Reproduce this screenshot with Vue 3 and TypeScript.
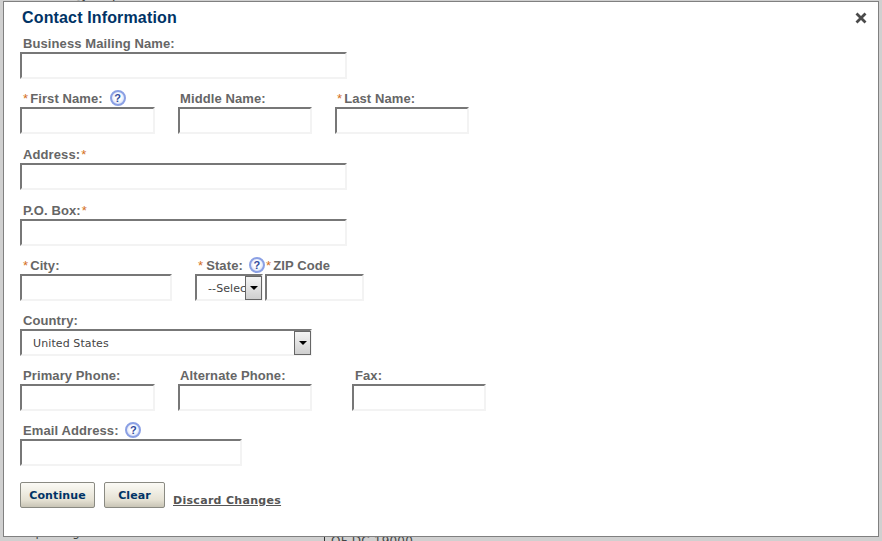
<script setup lang="ts">
import { ref } from 'vue'

const states = ['--Select--', 'DC', 'MD', 'VA']
const state = ref('--Select--')
const country = ref('United States')
</script>

<template>
  <div class="page">
    <div class="backdrop">
      <p class="back-top">Washington, DC 20000</p>
      <div class="back-bottom">
        <span class="back-left">Reporting</span>
        <span class="back-right">OF DC 19000</span>
      </div>
    </div>

    <div class="modal">
      <h2>Contact Information</h2>
      <button class="close" type="button" aria-label="Close">
        <svg width="12" height="12" viewBox="0 0 12 12">
          <path d="M1.5 1.5 10.5 10.5M10.5 1.5 1.5 10.5" stroke="#4a4a4a" stroke-width="2.8" fill="none" />
        </svg>
      </button>

      <form class="form" @submit.prevent>
        <div class="row">
          <div class="field w-wide">
            <label>Business Mailing Name:</label>
            <input type="text" />
          </div>
        </div>

        <div class="row">
          <div class="field w-name-first">
            <label><span class="req">*</span>First Name: <span class="help">?</span></label>
            <input type="text" />
          </div>
          <div class="field w-name">
            <label>Middle Name:</label>
            <input type="text" />
          </div>
          <div class="field w-name">
            <label><span class="req">*</span>Last Name:</label>
            <input type="text" />
          </div>
        </div>

        <div class="row tall">
          <div class="field w-wide">
            <label>Address:<span class="req after">*</span></label>
            <input type="text" />
          </div>
        </div>

        <div class="row tall">
          <div class="field w-wide">
            <label>P.O. Box:<span class="req after">*</span></label>
            <input type="text" />
          </div>
        </div>

        <div class="row">
          <div class="field w-city">
            <label><span class="req">*</span>City:</label>
            <input type="text" />
          </div>
          <div class="state-zip">
            <div class="field w-state">
              <label><span class="req spaced">*</span>State:<span class="help state-help">?</span></label>
              <div class="select-wrap">
                <select v-model="state">
                  <option v-for="s in states" :key="s">{{ s }}</option>
                </select>
                <span class="arrow"></span>
              </div>
            </div>
            <div class="field w-zip">
              <label class="zip-label"><span class="req">*</span>ZIP Code</label>
              <input type="text" />
            </div>
          </div>
        </div>

        <div class="row">
          <div class="field w-country">
            <label>Country:</label>
            <div class="select-wrap">
              <select v-model="country">
                <option>United States</option>
              </select>
              <span class="arrow"></span>
            </div>
          </div>
        </div>

        <div class="row">
          <div class="field w-name-first">
            <label>Primary Phone:</label>
            <input type="text" />
          </div>
          <div class="field w-name">
            <label>Alternate Phone:</label>
            <input type="text" />
          </div>
          <div class="field w-name fax">
            <label>Fax:</label>
            <input type="text" />
          </div>
        </div>

        <div class="row">
          <div class="field w-email">
            <label>Email Address: <span class="help">?</span></label>
            <input type="text" />
          </div>
        </div>

        <div class="actions">
          <button class="btn" type="submit">Continue</button>
          <button class="btn btn-clear" type="reset">Clear</button>
          <a class="discard" href="#" @click.prevent>Discard Changes</a>
        </div>
      </form>
    </div>
  </div>
</template>

<style>
html,
body {
  margin: 0;
  background: #d0d0d0;
}
</style>

<style scoped>
.page {
  position: relative;
  width: 882px;
  height: 541px;
  overflow: hidden;
  background: #d0d0d0;
  font-family: 'Liberation Sans', Arial, sans-serif;
}

.backdrop {
  display: flex;
  flex-direction: column;
  justify-content: space-between;
  height: 541px;
  color: #444;
}

.back-top {
  margin: -15px 0 0 20px;
  font-weight: bold;
  font-size: 16px;
  line-height: 20px;
}

.back-bottom {
  display: flex;
  margin-bottom: -7px;
  line-height: 14px;
  font-family: 'DejaVu Sans', sans-serif;
  font-size: 12px;
  letter-spacing: 0.2px;
}

.back-left {
  width: 304px;
  padding-left: 20px;
  margin-top: -9px;
}

.back-right {
  border-left: 1px solid #333;
  padding-left: 6px;
}

.modal {
  position: absolute;
  left: 3px;
  top: 1px;
  width: 874px;
  height: 534px;
  background: #fff;
  border: 1px solid #808080;
}

h2 {
  margin: 0;
  position: absolute;
  left: 18px;
  top: 6px;
  font-size: 16px;
  line-height: 20px;
  letter-spacing: 0.15px;
  color: #003366;
}

.close {
  position: absolute;
  right: 11px;
  top: 10px;
  width: 12px;
  height: 12px;
  padding: 0;
  border: none;
  background: none;
  display: flex;
}

.form {
  padding: 22px 0 0 16px;
}

.row {
  display: flex;
  gap: 23px;
}

.row.tall {
  margin-top: 1px;
}

.field {
  display: flex;
  flex-direction: column;
  flex: none;
}

label {
  display: flex;
  align-items: center;
  height: 28px;
  padding: 10px 0 0 3px;
  box-sizing: border-box;
  white-space: pre;
  font-size: 13px;
  font-weight: bold;
  letter-spacing: 0.1px;
  color: #666;
}

.w-name label {
  padding-left: 2px;
}

.w-name.fax label {
  padding-left: 3px;
}

.req {
  color: #d4701c;
  margin-right: 2px;
  font-weight: normal;
}

.req.after {
  margin: 0 0 0 1px;
}

.req.spaced {
  margin-right: 3px;
}

.help {
  display: inline-block;
  flex: none;
  width: 16px;
  height: 16px;
  margin-left: 3px;
  box-sizing: border-box;
  border: 2px solid #8ba0e4;
  border-radius: 50%;
  background: radial-gradient(circle at 50% 45%, #fff 35%, #c3cff2 100%);
  color: #2f4a9c;
  font-size: 11px;
  line-height: 12px;
  letter-spacing: 0;
  text-align: center;
}

.state-help {
  margin-left: 6px;
}

input,
select {
  display: block;
  width: 100%;
  height: 27px;
  box-sizing: border-box;
  margin: 0;
  border-style: solid;
  border-width: 2px;
  border-color: #777 #f3f3f3 #f3f3f3 #777;
  border-radius: 0;
  background: #fff;
  outline: none;
}

select {
  appearance: none;
  padding: 2px 0 0 11px;
  font-family: 'DejaVu Sans', sans-serif;
  font-size: 11px;
  letter-spacing: 0.1px;
  color: #444;
}

.select-wrap {
  position: relative;
}

.arrow {
  position: absolute;
  right: 1px;
  top: 2px;
  width: 17px;
  height: 24px;
  box-sizing: border-box;
  border: 1px solid #666;
  background: linear-gradient(#f4f4f4, #cfcfcf);
}

.arrow::after {
  content: '';
  position: absolute;
  left: 4px;
  top: 9px;
  border-style: solid;
  border-width: 4px 4px 0;
  border-color: #000 transparent transparent;
}

.w-wide {
  width: 327px;
}

.w-name-first {
  width: 135px;
}

.w-name {
  width: 134px;
}

.w-city {
  width: 152px;
}

.w-state {
  width: 68px;
}

.w-zip {
  width: 99px;
}

.w-country {
  width: 292px;
}

.w-email {
  width: 222px;
}

.state-zip {
  display: flex;
  gap: 2px;
}

.zip-label {
  padding-left: 1px;
}

.fax {
  margin-left: 17px;
}

.actions {
  display: flex;
  align-items: flex-start;
  gap: 9px;
  margin-top: 16px;
}

.btn {
  width: 75px;
  height: 26px;
  padding: 0;
  border: 1px solid #8a8a82;
  border-radius: 2px;
  background: linear-gradient(#fbfaf5, #e6e2d4 70%, #c9c5b6);
  font-family: 'DejaVu Sans', sans-serif;
  font-size: 11px;
  font-weight: bold;
  letter-spacing: 0.1px;
  color: #003366;
}

.btn-clear {
  width: 61px;
}

.discard {
  margin: 12px 0 0 -1px;
  font-family: 'DejaVu Sans', sans-serif;
  font-size: 11px;
  font-weight: bold;
  letter-spacing: 0.3px;
  color: #555;
}
</style>
